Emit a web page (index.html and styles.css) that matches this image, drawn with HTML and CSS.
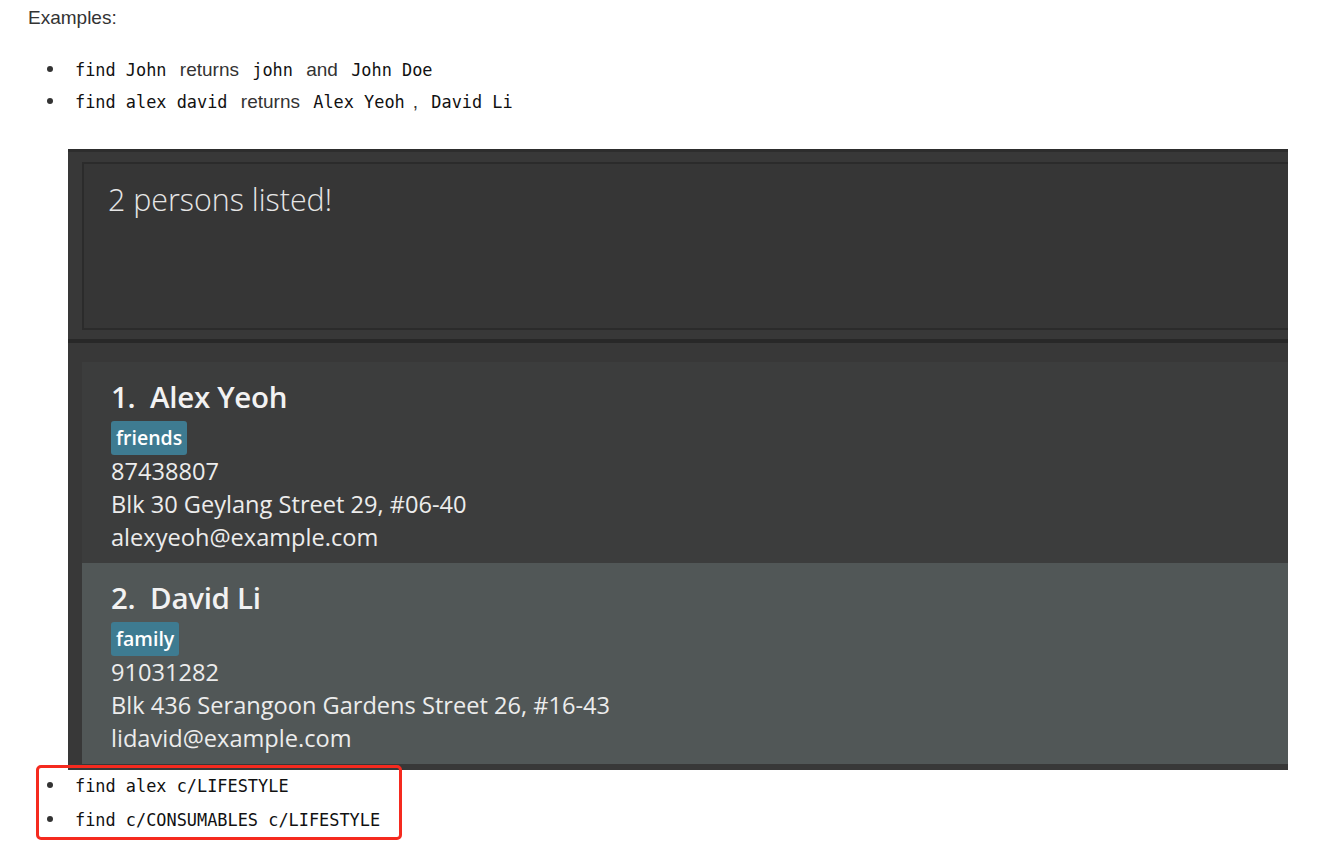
FILE: index.html
```html
<!DOCTYPE html>
<html>
<head>
<meta charset="utf-8">
<link rel="stylesheet" href="styles.css">
</head>
<body>
<div class="doc">
  <p class="label">Examples:</p>
  <ul class="examples">
    <li><code>find John</code> returns <code>john</code> and <code>John Doe</code></li>
    <li><code>find alex david</code> returns <code>Alex Yeoh</code>, <code>David Li</code></li>
  </ul>
  <div class="shot">
    <div class="top-strip"></div>
    <div class="result-area">
      <div class="result-box">2 persons listed!</div>
    </div>
    <div class="divider"></div>
    <div class="list-area">
      <div class="card odd">
        <div class="name">1.&nbsp; Alex Yeoh</div>
        <div class="tags"><span class="tag">friends</span></div>
        <div class="field">87438807</div>
        <div class="field">Blk 30 Geylang Street 29, #06-40</div>
        <div class="field">alexyeoh@example.com</div>
      </div>
      <div class="card even">
        <div class="name">2.&nbsp; David Li</div>
        <div class="tags"><span class="tag">family</span></div>
        <div class="field">91031282</div>
        <div class="field">Blk 436 Serangoon Gardens Street 26, #16-43</div>
        <div class="field">lidavid@example.com</div>
      </div>
    </div>
  </div>
  <ul class="examples highlighted">
    <li><code>find alex c/LIFESTYLE</code></li>
    <li><code>find c/CONSUMABLES c/LIFESTYLE</code></li>
  </ul>
</div>
</body>
</html>
```

FILE: styles.css
```css
html, body {
  margin: 0;
  padding: 0;
  background: #ffffff;
}

body {
  font-family: "Liberation Sans", Arial, sans-serif;
  font-size: 19px;
  color: #333333;
}

.doc {
  padding: 6px 0 0 28px;
}

.label {
  margin: 0;
  line-height: 24px;
}

.examples {
  margin: 24px 0 0 0;
  padding-left: 39px;
  list-style: none;
}

.examples li {
  line-height: 32px;
}

.examples li::before {
  content: "";
  display: inline-block;
  width: 6px;
  height: 6px;
  border-radius: 50%;
  background: #333333;
  margin-left: -20px;
  margin-right: 14px;
  vertical-align: middle;
  position: relative;
  top: -2px;
}

.examples code {
  font-family: "DejaVu Sans Mono", "Liberation Mono", monospace;
  font-size: 16.9px;
  color: #111111;
  padding: 0 8px;
}

.shot {
  margin: 31px 0 0 40px;
  width: 1220px;
  height: 621px;
  background: #383838;
  overflow: hidden;
  display: flex;
  flex-direction: column;
  font-family: "Open Sans", "Noto Sans", sans-serif;
}

.top-strip {
  height: 3px;
  background: #2d2d2d;
  flex: none;
}

.result-area {
  height: 187px;
  padding: 10px 0 0 14px;
  box-sizing: border-box;
  flex: none;
}

.result-box {
  width: 1300px;
  height: 168px;
  box-sizing: border-box;
  border: 2px solid #2b2b2b;
  background: #363636;
  padding: 16px 0 0 24px;
  color: #e6e6e6;
  font-size: 30.4px;
  font-weight: 300;
  line-height: 40px;
}

.divider {
  height: 4px;
  background: #282828;
  flex: none;
}

.list-area {
  padding: 19px 0 0 14px;
  flex: 1;
}

.card {
  width: 1300px;
  height: 201px;
  box-sizing: border-box;
  padding: 20px 0 0 29px;
  color: #ececec;
}

.card.odd {
  background: #3c3d3d;
}

.card.even {
  background: #515757;
}

.name {
  font-size: 29.5px;
  font-weight: 600;
  line-height: 30px;
  color: #f2f2f2;
  letter-spacing: -0.3px;
}

.tags {
  margin-top: 9px;
  display: flex;
}

.tag {
  display: inline-block;
  background: #3e7b91;
  color: #ffffff;
  font-size: 19.5px;
  font-weight: 600;
  line-height: 34px;
  padding: 0 5px;
  border-radius: 3px;
}

.field {
  font-size: 23.6px;
  line-height: 33px;
}

.highlighted {
  margin: -5px 0 0 8px;
  padding: 1px 0 0 28px;
  width: 332px;
  border: 3px solid #f52a1f;
  border-radius: 5px;
}

.highlighted li {
  line-height: 33px;
}
```
